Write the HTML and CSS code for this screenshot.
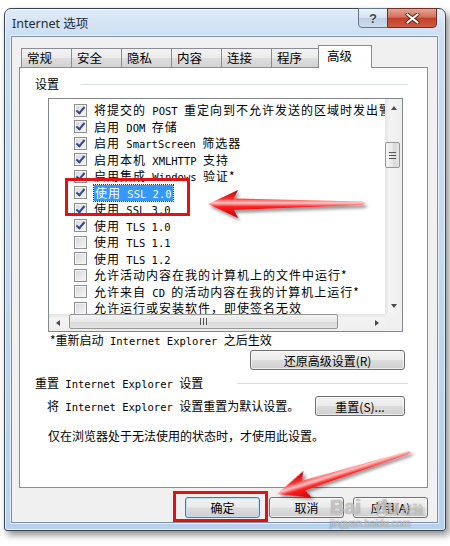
FILE: index.html
```html
<!DOCTYPE html>
<html lang="zh-CN">

<head>
  <meta charset="utf-8">
  <link rel="stylesheet" href="styles.css">
</head>

<body>
  <div class="window">
    <div class="titlebar">
      <span class="title">Internet 选项</span>
      <div class="caption">
        <span class="cap help">?</span>
        <span class="cap close">
          <svg width="15" height="11" viewBox="0 0 15 11">
            <path d="M2.5 1.5 L12.5 9.5 M12.5 1.5 L2.5 9.5" stroke="#5b2118" stroke-width="4" stroke-linecap="round"/>
            <path d="M2.5 1.5 L12.5 9.5 M12.5 1.5 L2.5 9.5" stroke="#fff" stroke-width="2.2" stroke-linecap="round"/>
          </svg>
        </span>
      </div>
    </div>

    <div class="client">
      <div class="tabs">
        <span class="tab">常规</span>
        <span class="tab">安全</span>
        <span class="tab">隐私</span>
        <span class="tab">内容</span>
        <span class="tab">连接</span>
        <span class="tab">程序</span>
        <span class="tab active">高级</span>
      </div>

      <div class="panel">
        <div class="group">
          <span>设置</span>
          <i class="rule rule-1"></i>
        </div>

        <div class="listbox">
          <div class="rows">
            <div class="row"><span class="cb on"></span><span>将提交的<span class="en"> POST </span>重定向到不允许发送的区域时发出警告</span></div>
            <div class="row"><span class="cb on"></span><span>启用<span class="en"> DOM </span>存储</span></div>
            <div class="row"><span class="cb on"></span><span>启用<span class="en"> SmartScreen </span>筛选器</span></div>
            <div class="row"><span class="cb on"></span><span>启用本机<span class="en"> XMLHTTP </span>支持</span></div>
            <div class="row"><span class="cb on"></span><span>启用集成<span class="en"> Windows </span>验证*</span></div>
            <div class="row"><span class="cb on"></span><span class="sel">使用<span class="en"> SSL 2.0</span></span></div>
            <div class="row"><span class="cb on"></span><span>使用<span class="en"> SSL 3.0</span></span></div>
            <div class="row"><span class="cb on"></span><span>使用<span class="en"> TLS 1.0</span></span></div>
            <div class="row"><span class="cb"></span><span>使用<span class="en"> TLS 1.1</span></span></div>
            <div class="row"><span class="cb"></span><span>使用<span class="en"> TLS 1.2</span></span></div>
            <div class="row"><span class="cb"></span><span>允许活动内容在我的计算机上的文件中运行*</span></div>
            <div class="row"><span class="cb"></span><span>允许来自<span class="en"> CD </span>的活动内容在我的计算机上运行*</span></div>
            <div class="row"><span class="cb"></span><span>允许运行或安装软件，即使签名无效</span></div>
          </div>
          <div class="vscroll">
            <span class="sb-btn"><i class="tri up"></i></span>
            <span class="sb-thumb v"><i class="grip"></i></span>
            <span class="sb-btn"><i class="tri down"></i></span>
          </div>
          <div class="hscroll">
            <span class="sb-btn"><i class="tri left"></i></span>
            <span class="sb-thumb h"><i class="grip"></i></span>
            <span class="sb-btn"><i class="tri right"></i></span>
          </div>
          <div class="corner"></div>
        </div>

        <p class="note note-1">*重新启动<span class="en"> Internet Explorer </span>之后生效</p>
        <button class="btn restore">还原高级设置(R)</button>

        <div class="group group-2">
          <span>重置<span class="en"> Internet Explorer </span>设置</span>
          <i class="rule rule-2"></i>
        </div>
        <div class="reset-row">
          <span>将<span class="en"> Internet Explorer </span>设置重置为默认设置。</span>
          <button class="btn reset">重置(S)...</button>
        </div>
        <p class="note note-2">仅在浏览器处于无法使用的状态时，才使用此设置。</p>
      </div>

      <div class="actions">
        <button class="btn default">确定</button>
        <button class="btn">取消</button>
        <button class="btn">应用(A)</button>
      </div>
    </div>
  </div>

  <!-- annotations drawn over the screenshot -->
  <svg class="marks" width="450" height="546" viewBox="0 0 450 546">
    <defs>
      <linearGradient id="red" x1="0" y1="0" x2="0" y2="1">
        <stop offset="0" stop-color="#b80000"/>
        <stop offset=".3" stop-color="#ff2a2a"/>
        <stop offset=".46" stop-color="#ffc8c8"/>
        <stop offset=".6" stop-color="#ff1e1e"/>
        <stop offset="1" stop-color="#c00000"/>
      </linearGradient>
      <filter id="shadow" x="-10%" y="-40%" width="130%" height="200%">
        <feDropShadow dx="2" dy="3" stdDeviation="1.6" flood-color="#000" flood-opacity=".4"/>
      </filter>
    </defs>
    <rect x="66.5" y="179.5" width="122" height="35" fill="none" stroke="#e31212" stroke-width="3"/>
    <rect x="174.5" y="492.5" width="92" height="28" fill="none" stroke="#e31212" stroke-width="3"/>
    <polygon points="208,204 238,190 234,198.5 362,201.5 366,203 362,205 234,210 238,218" fill="url(#red)" filter="url(#shadow)"/>
    <polygon points="277,494 309,480 305,489 414,492.6 418,494 414,495.4 305,499 309,508" fill="url(#red)" filter="url(#shadow)" transform="rotate(-17.5 277 494)"/>
    <!-- watermark paw -->
    <g fill="rgba(255,255,255,.55)" stroke="rgba(90,90,90,.45)" stroke-width=".8">
      <ellipse cx="382" cy="513" rx="5" ry="4"/>
      <circle cx="376" cy="506" r="2"/>
      <circle cx="380" cy="503" r="2"/>
      <circle cx="385" cy="503" r="2"/>
      <circle cx="389" cy="506" r="2"/>
    </g>
  </svg>

  <div class="watermark">
    <span class="wm-logo">Bai<i class="paw-gap"></i>du<small>经验</small></span>
    <span class="wm-url">jingyan.baidu.com</span>
  </div>
</body>

</html>
```

FILE: styles.css
```css
* {
  -webkit-box-sizing: border-box;
  box-sizing: border-box;
}

body {
  margin: 0;
  width: 450px;
  height: 546px;
  overflow: hidden;
  position: relative;
  background: #fff;
  color: #000;
  font: 12px/1.2 "Noto Sans CJK SC", sans-serif;
}

.en {
  font: 10.5px "DejaVu Sans Mono", monospace;
  letter-spacing: 0;
}

button {
  font: 12px "Noto Sans CJK SC", sans-serif;
  color: #000;
  padding: 0;
}
/* window frame */

.window {
  display: flex;
  flex-direction: column;
  width: 442px;
  height: 523px;
  margin: 8px 0 0 4px;
  padding: 0 7px 7px 6px;
  border: 1px solid #3b4552;
  border-radius: 7px 7px 3px 3px;
  background: linear-gradient(#dfebf8 0, #c9ddf2 30px, #b6d2ef 100%);
  box-shadow: 3px 4px 7px rgba(0, 0, 0, .45), inset 0 0 0 1px rgba(255, 255, 255, .65);
}

.titlebar {
  display: flex;
  align-items: flex-start;
  height: 27px;
}

.title {
  align-self: center;
  margin-right: auto;
  padding-left: 1px;
  font: 12.5px "Noto Sans", "Noto Sans CJK SC", sans-serif;
  color: #1e2b3a;
}

.caption {
  display: flex;
  margin: -1px 1px 0 0;
}

.cap {
  display: flex;
  align-items: center;
  justify-content: center;
  height: 20px;
}

.help {
  width: 30px;
  border: 1px solid #66758a;
  border-radius: 0 0 0 4px;
  background: linear-gradient(#edf3fa, #d5e2f0 48%, #bccfe4 52%, #cddcee);
  color: #3c4652;
  font: bold 13px "Liberation Sans", sans-serif;
  text-shadow: 0 0 2px #fff;
}

.close {
  width: 50px;
  margin-left: -1px;
  border: 1px solid #6c3127;
  border-radius: 0 0 4px 0;
  background: linear-gradient(#e6a596, #d4705c 45%, #c2412b 52%, #d05a3f);
}

.client {
  flex: 1;
  display: flex;
  flex-direction: column;
  padding: 8px 9px 0 7px;
  border: 1px solid #7f90a4;
  background: #f0f0f0;
  box-shadow: 0 0 0 1px rgba(255, 255, 255, .6);
}
/* tabs */

.tabs {
  position: relative;
  z-index: 1;
  display: flex;
  align-items: flex-end;
  height: 22px;
  padding-left: 2px;
}

.tab {
  width: 51px;
  height: 19px;
  margin-right: -1px;
  padding-left: 5px;
  border: 1px solid #898c95;
  border-bottom: 0;
  background: linear-gradient(#f3f3f3, #ebebeb 50%, #dedede 50%, #d2d2d2);
  font-size: 12.5px;
  line-height: 18px;
}

.tab.active {
  width: 54px;
  height: 23px;
  margin: 0 0 -1px -3px;
  padding-left: 8px;
  background: #fff;
  line-height: 20px;
}

.panel {
  height: 421px;
  border: 1px solid #898c95;
  background: #fff;
}
/* group headings */

.group {
  display: flex;
  align-items: center;
  height: 16px;
  margin: 8px 19px 0 15px;
}

.group-2 {
  margin-top: 5px;
}

.rule {
  flex: 1;
  border-top: 1px solid #d5dfe5;
}

.rule-1 {
  margin-left: 22px;
}

.rule-2 {
  margin-left: 34px;
}
/* list box */

.listbox {
  display: grid;
  grid-template-columns: 1fr 17px;
  grid-template-rows: 1fr 17px;
  width: 355px;
  height: 234px;
  margin: 6px 0 0 28px;
  border: 1px solid #828790;
}

.rows {
  overflow: hidden;
  padding-top: 3px;
  letter-spacing: 1px;
  line-height: 16px;
  white-space: nowrap;
}

.row {
  display: flex;
  align-items: center;
  gap: 7px;
  height: 16.5px;
  padding-left: 25px;
}

.cb {
  flex: none;
  position: relative;
  width: 13px;
  height: 13px;
  border: 1px solid #8e8f8f;
  background: linear-gradient(135deg, #d3d6db, #f7f7f7);
  box-shadow: inset 0 0 0 1px #f4f4f4;
}

.cb.on::after {
  content: "";
  position: absolute;
  left: 3px;
  top: 0;
  width: 3px;
  height: 7px;
  border: solid #34498a;
  border-width: 0 2px 2px 0;
  transform: rotate(40deg);
}

.sel {
  padding: 0 1px;
  background: #3399ff;
  color: #fff;
  outline: 1px dotted #333;
}

.vscroll,
.hscroll {
  display: flex;
  background: linear-gradient(to right, #e3e3e3, #f4f4f4 25%, #eeeeee);
}

.vscroll {
  flex-direction: column;
}

.hscroll {
  background: linear-gradient(#e3e3e3, #f4f4f4 25%, #eeeeee);
}

.corner {
  background: #f0f0f0;
}

.sb-btn {
  display: flex;
  align-items: center;
  justify-content: center;
  width: 17px;
  height: 17px;
}

.vscroll .sb-btn:last-child {
  margin: auto 0 0 0;
}

.hscroll .sb-btn:last-child {
  margin: 0 0 0 auto;
}

.tri {
  width: 0;
  height: 0;
  border: 3.5px solid transparent;
}

.tri.up {
  border-bottom: 4px solid #4a4a4a;
  border-top: 0;
}

.tri.down {
  border-top: 4px solid #4a4a4a;
  border-bottom: 0;
}

.tri.left {
  border-right: 4px solid #4a4a4a;
  border-left: 0;
}

.tri.right {
  border-left: 4px solid #4a4a4a;
  border-right: 0;
}

.sb-thumb {
  display: flex;
  align-items: center;
  justify-content: center;
  border: 1px solid #979797;
  border-radius: 2px;
}

.sb-thumb.v {
  width: 15px;
  height: 26px;
  margin: 26px 0 0 0;
  background: linear-gradient(to right, #f4f4f4, #e8e8e8 50%, #d8d8d8 50%, #e4e4e4);
}

.sb-thumb.h {
  width: 269px;
  height: 15px;
  margin: 0 0 0 3px;
  background: linear-gradient(#f4f4f4, #e8e8e8 50%, #d8d8d8 50%, #e4e4e4);
}

.grip {
  display: block;
}

.v .grip {
  width: 7px;
  height: 7px;
  background: repeating-linear-gradient(#555 0 1px, transparent 1px 3px);
}

.h .grip {
  width: 7px;
  height: 7px;
  background: repeating-linear-gradient(to right, #555 0 1px, transparent 1px 3px);
}
/* texts and buttons below the list */

.note {
  margin: 0;
  line-height: 14px;
  white-space: nowrap;
}

.note-1 {
  margin: 1px 0 0 30px;
}

.note-2 {
  margin: 13px 0 0 28px;
}

.btn {
  height: 20px;
  border: 1px solid #707070;
  border-radius: 3px;
  background: linear-gradient(#f2f2f2, #ebebeb 48%, #dddddd 52%, #cfcfcf);
  box-shadow: inset 0 0 0 1px rgba(255, 255, 255, .6);
}

.restore {
  display: block;
  width: 155px;
  margin: 3px 22px 0 auto;
}

.reset-row {
  display: flex;
  align-items: center;
  justify-content: space-between;
  height: 20px;
  margin: 5px 22px 0 27px;
}

.reset {
  width: 90px;
}

.actions {
  display: flex;
  justify-content: flex-end;
  gap: 9px;
  margin-top: 9px;
}

.actions .btn {
  width: 75px;
  height: 21px;
}

.actions .default {
  border-color: #3c7fb1;
  box-shadow: inset 0 0 0 1px #bfe0f7;
}
/* overlay */

.marks {
  position: absolute;
  left: 0;
  top: 0;
  pointer-events: none;
}

.watermark {
  position: absolute;
  left: 330px;
  top: 496px;
  display: flex;
  flex-direction: column;
  color: rgba(255, 255, 255, .55);
  text-shadow: 0 0 1px rgba(90, 90, 90, .5), 0 0 1px rgba(90, 90, 90, .5);
  pointer-events: none;
}

.wm-logo {
  display: flex;
  align-items: baseline;
  font: bold 20px/22px "Liberation Sans", sans-serif;
}

.paw-gap {
  width: 14px;
}

.wm-logo small {
  margin-left: 2px;
  font: 11px "Noto Sans CJK SC", sans-serif;
}

.wm-url {
  font: 10px/12px "Liberation Sans", sans-serif;
}
```
